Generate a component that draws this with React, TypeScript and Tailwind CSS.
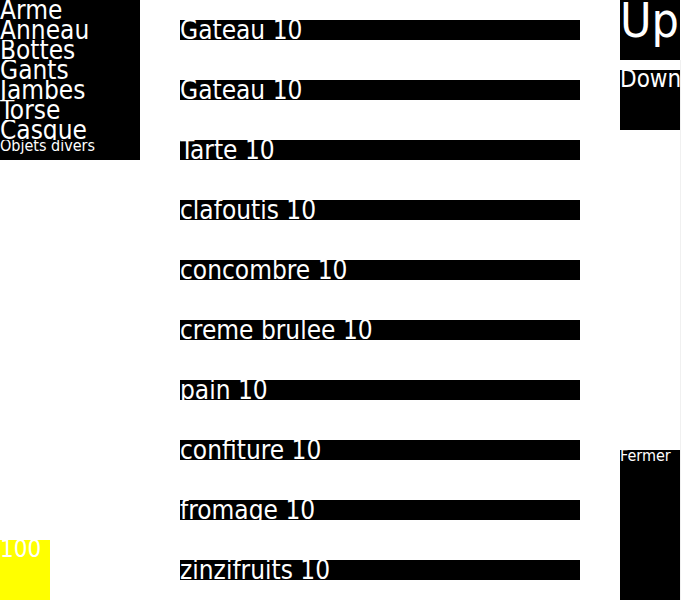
import React from 'react';

// 인벤토리 화면: 왼쪽 카테고리, 가운데 아이템 목록, 오른쪽 스크롤/닫기 버튼
const categories = ['Arme', 'Anneau', 'Bottes', 'Gants', 'Jambes', 'Torse', 'Casque'];

const items = [
  { name: 'Gateau', qty: 10 },
  { name: 'Gateau', qty: 10 },
  { name: 'Tarte', qty: 10 },
  { name: 'clafoutis', qty: 10 },
  { name: 'concombre', qty: 10 },
  { name: 'creme brulee', qty: 10 },
  { name: 'pain', qty: 10 },
  { name: 'confiture', qty: 10 },
  { name: 'fromage', qty: 10 },
  { name: 'zinzifruits', qty: 10 },
];

const font = "font-['DejaVu_Sans_Condensed','DejaVu_Sans',sans-serif] font-stretch-condensed";

const App: React.FC = () => {
  return (
    <div className={`flex w-[681px] h-[600px] bg-white text-white ${font}`}>
      {/* 카테고리 + 골드 */}
      <div className="flex flex-col justify-between w-[140px] h-[600px]">
        <div className="flex flex-col bg-black w-[140px] h-[160px]">
          {categories.map((c) => (
            <div key={c} className="h-[20px] overflow-hidden text-[26px] leading-[20px] whitespace-nowrap">
              {c}
            </div>
          ))}
          <div className="h-[20px] overflow-hidden text-[16px] leading-[12px] whitespace-nowrap">
            Objets divers
          </div>
        </div>
        <div className="w-[50px] h-[60px] bg-[#ffff00] text-[24px] leading-[18px] overflow-hidden">
          100
        </div>
      </div>

      {/* 아이템 목록 */}
      <div className="flex flex-col gap-[40px] pt-[20px] ml-[40px] w-[400px]">
        {items.map((item, i) => (
          <div
            key={i}
            className="h-[20px] w-[400px] bg-black overflow-hidden text-[26px] leading-[20px] whitespace-nowrap"
          >
            {item.name} {item.qty}
          </div>
        ))}
      </div>

      {/* 버튼 */}
      <div className="flex flex-col ml-[40px] w-[60px] h-[600px]">
        <div className="h-[60px] bg-black overflow-hidden text-[48px] leading-[41px] whitespace-nowrap">
          Up
        </div>
        <div className="mt-[10px] h-[60px] bg-black overflow-hidden text-[24px] leading-[19px] whitespace-nowrap">
          Down
        </div>
        <div className="mt-auto h-[150px] bg-black overflow-hidden text-[16px] leading-[12px] whitespace-nowrap">
          Fermer
        </div>
      </div>
      <div className="mt-[60px] w-px h-[540px] bg-[#f0f0f0]" />
    </div>
  );
};

export default App;
